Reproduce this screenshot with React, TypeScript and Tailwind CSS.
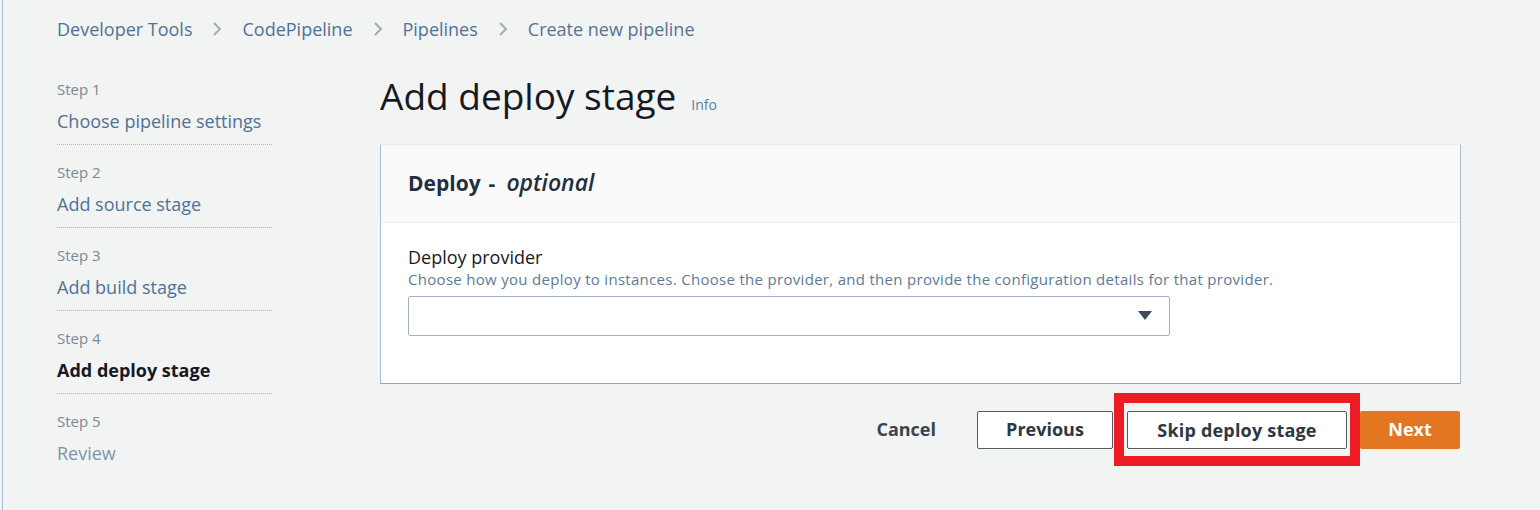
import React from "react";

function Chevron() {
  return (
    <svg width="10" height="16" viewBox="0 0 10 16" className="mx-[20px] shrink-0">
      <polyline points="2,2 8,8 2,14" fill="none" stroke="#a3abb3" strokeWidth="2" />
    </svg>
  );
}

type StepProps = { n: number; title: string; active?: boolean; disabled?: boolean; last?: boolean };

function Step({ n, title, active, disabled, last }: StepProps) {
  return (
    <div className={`pt-[17px] ${last ? "" : "pb-[11px] border-b border-dotted border-[#a6b7c7]"}`}>
      <div className="h-[20px] leading-[20px] text-[15px] text-[#7b8896]">Step {n}</div>
      <div
        className={`mt-[10px] h-[24px] leading-[24px] text-[18px] ${
          active ? "font-bold text-[#16191f]" : disabled ? "text-[#7e93a9]" : "text-[#4f7297]"
        }`}
      >
        {title}
      </div>
    </div>
  );
}

export default function App() {
  return (
    <div className="w-[1540px] h-[510px] bg-[#f2f3f3] pl-[2px] font-['Open_Sans','Noto_Sans',sans-serif] overflow-hidden">
      <div className="h-full border-l border-[#a7bdd0] pl-[54px]">
        {/* Breadcrumb */}
        <div className="pt-[18px] h-[40px] flex items-center text-[18px] leading-[22px] text-[#4f7297]">
          <span>Developer Tools</span>
          <Chevron />
          <span>CodePipeline</span>
          <Chevron />
          <span>Pipelines</span>
          <Chevron />
          <span className="text-[#577390]">Create new pipeline</span>
        </div>

        <div className="flex">
          {/* Sidebar */}
          <div className="w-[215px] pt-[22px] shrink-0">
            <Step n={1} title="Choose pipeline settings" />
            <Step n={2} title="Add source stage" />
            <Step n={3} title="Add build stage" />
            <Step n={4} title="Add deploy stage" active />
            <Step n={5} title="Review" disabled last />
          </div>

          {/* Main */}
          <div className="ml-[108px] w-[1081px] shrink-0">
            <div className="mt-[33px] flex items-baseline h-[46px]">
              <h1 className="text-[37px] leading-[46px] text-[#16191f] font-normal">Add deploy stage</h1>
              <span className="ml-[15px] text-[14px] text-[#5a7fa5]">Info</span>
            </div>

            <div className="mt-[25px] bg-white border-l border-r border-b border-[#a9bed2] border-b-[#8fa7bf] border-t border-t-[#eaeded]">
              <div className="h-[78px] bg-[#fafafa] border-b border-[#eaeded] flex items-center pl-[27px] pb-[3px]">
                <span className="text-[21px] font-bold text-[#232f3e] flex items-baseline">
                  <span>Deploy</span>
                  <span className="ml-[8px]">-</span>
                  <span className="ml-[11px] italic text-[23px] font-semibold">optional</span>
                </span>
              </div>
              <div className="pl-[27px] pt-[22px] pb-[47px]">
                <div className="text-[18px] leading-[24px] text-[#16191f]">Deploy provider</div>
                <div className="text-[15px] leading-[20px] tracking-[0.3px] text-[#5e7a96]">
                  Choose how you deploy to instances. Choose the provider, and then provide the configuration details for that provider.
                </div>
                <div className="mt-[7px] w-[762px] h-[40px] border border-[#9fb3c6] rounded-[2px] bg-white flex items-center justify-end pr-[17px]">
                  <svg width="14" height="10" viewBox="0 0 14 10">
                    <polygon points="0,0 14,0 7,9" fill="#3d4a5a" />
                  </svg>
                </div>
              </div>
            </div>

            {/* Buttons */}
            <div className="mt-[9px] flex items-center justify-end pr-[1px]">
              <span className="text-[18px] font-bold text-[#3a4350] mr-[41px]">Cancel</span>
              <button className="w-[136px] h-[38px] bg-white border border-[#545b64] rounded-[2px] text-[18px] font-bold text-[#2e3744]">
                Previous
              </button>
              <div className="ml-[1px] w-[246px] border-[10px] border-[#ed1c24] pt-[8px] pb-[7px] px-[3px]">
                <button className="w-[220px] h-[38px] bg-white border border-[#545b64] rounded-[2px] text-[18px] font-bold text-[#2e3744] tracking-[0.2px]">
                  Skip deploy stage
                </button>
              </div>
              <button className="w-[100px] h-[38px] bg-[#e27621] rounded-[2px] text-[18px] font-bold text-white">
                Next
              </button>
            </div>
          </div>
        </div>
      </div>
    </div>
  );
}
